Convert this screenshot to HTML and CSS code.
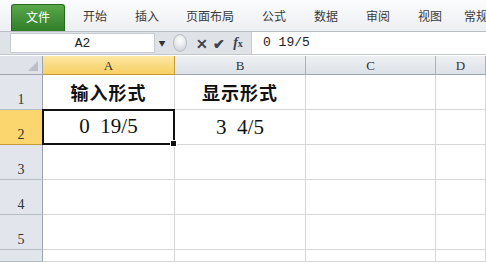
FILE: index.html
```html
<!DOCTYPE html>
<html lang="zh-CN">
<head>
    <meta charset="UTF-8">
    <title>Excel</title>
    <link rel="stylesheet" href="styles.css">
</head>
<body>
    <div class="ribbon">
        <div class="tab file">文件</div>
        <div class="tab t1">开始</div>
        <div class="tab t2">插入</div>
        <div class="tab t3">页面布局</div>
        <div class="tab t4">公式</div>
        <div class="tab t5">数据</div>
        <div class="tab t6">审阅</div>
        <div class="tab t7">视图</div>
        <div class="tab t8">常规</div>
    </div>
    <div class="formulaBar">
        <div class="nameBox">A2</div>
        <div class="arrow">&#9660;</div>
        <div class="knob"></div>
        <div class="fbtn cancel">&#10005;</div>
        <div class="fbtn ok">&#10004;</div>
        <div class="fbtn fx"><i>f</i><span>x</span></div>
        <div class="formulaInput">0 19/5</div>
    </div>
    <div class="sheet">
        <div class="corner"><span class="tri"></span></div>
        <div class="colHead active">A</div>
        <div class="colHead">B</div>
        <div class="colHead">C</div>
        <div class="colHead">D</div>

        <div class="rowHead">1</div>
        <div class="cell big">输入形式</div>
        <div class="cell big">显示形式</div>
        <div class="cell"></div>
        <div class="cell"></div>

        <div class="rowHead active">2</div>
        <div class="cell big num selected">0&nbsp;&nbsp;19/5<span class="handle"></span></div>
        <div class="cell big num">3&nbsp;&nbsp;4/5</div>
        <div class="cell"></div>
        <div class="cell"></div>

        <div class="rowHead">3</div>
        <div class="cell"></div><div class="cell"></div><div class="cell"></div><div class="cell"></div>
        <div class="rowHead">4</div>
        <div class="cell"></div><div class="cell"></div><div class="cell"></div><div class="cell"></div>
        <div class="rowHead">5</div>
        <div class="cell"></div><div class="cell"></div><div class="cell"></div><div class="cell"></div>
        <div class="rowHead"></div>
        <div class="cell"></div><div class="cell"></div><div class="cell"></div><div class="cell"></div>
    </div>
</body>
</html>
```

FILE: styles.css
```css
body {
    margin: 0;
    width: 486px;
    height: 263px;
    overflow: hidden;
    background: #ffffff;
    font-family: "Noto Sans CJK SC", "Noto Sans", sans-serif;
}

.ribbon {
    height: 32px;
    display: flex;
    align-items: flex-end;
    background: linear-gradient(#fbfcfd, #eceff3);
    border-bottom: 1px solid #b9bec6;
    white-space: nowrap;
    overflow: hidden;
    box-sizing: border-box;
}
.tab {
    height: 27px;
    line-height: 24px;
    font-size: 12px;
    color: #3b3b3b;
    text-align: center;
    flex: none;
}
.file {
    margin-left: 11px;
    width: 54px;
    color: #ffffff;
    background: linear-gradient(#5aa84a, #2f7d28);
    border: 1px solid #2a6a22;
    border-bottom: none;
    border-radius: 3px 3px 0 0;
    box-sizing: border-box;
}
.t1 { width: 60px; }
.t2 { width: 44px; }
.t3 { width: 82px; }
.t4 { width: 46px; }
.t5 { width: 58px; }
.t6 { width: 46px; }
.t7 { width: 58px; }
.t8 { width: 34px; }

.formulaBar {
    height: 23px;
    display: flex;
    align-items: center;
    background: #dfe3e8;
    border-bottom: 1px solid #c3c8cf;
    margin-bottom: 1px;
    box-sizing: border-box;
}
.nameBox {
    margin-left: 10px;
    width: 145px;
    height: 20px;
    line-height: 20px;
    background: #ffffff;
    border: 1px solid #c6cbd2;
    text-align: center;
    font-family: "Liberation Mono", monospace;
    font-size: 13px;
    color: #222222;
    box-sizing: border-box;
}
.arrow {
    width: 14px;
    font-size: 7px;
    color: #333333;
    text-align: center;
}
.knob {
    width: 12px;
    height: 16px;
    margin-left: 4px;
    border-radius: 50%;
    background: radial-gradient(circle at 50% 35%, #ffffff, #c9ced5);
    border: 1px solid #b5bac2;
}
.fbtn {
    font-size: 14px;
    color: #3c4450;
    text-align: center;
    font-weight: bold;
}
.cancel { width: 18px; margin-left: 6px; }
.ok { width: 16px; }
.fx {
    width: 22px;
    font-family: "Liberation Serif", serif;
    font-size: 14px;
}
.fx span { font-size: 10px; }
.formulaInput {
    flex: 1;
    height: 22px;
    line-height: 22px;
    margin-left: 2px;
    padding-left: 11px;
    background: #ffffff;
    border-left: 1px solid #c6cbd2;
    font-family: "Liberation Mono", monospace;
    font-size: 13px;
    color: #222222;
}

.sheet {
    display: grid;
    grid-template-columns: 43px 132px 131px 130px 1fr;
    grid-template-rows: 19px repeat(5, 35px) 12px;
}
.corner {
    position: relative;
    background: #dfe3e9;
    border-right: 1px solid #9ea6b2;
    border-bottom: 1px solid #9ea6b2;
}
.tri {
    position: absolute;
    right: 4px;
    bottom: 3px;
    width: 0;
    height: 0;
    border-left: 10px solid transparent;
    border-bottom: 10px solid #b8bfc9;
}
.colHead {
    background: linear-gradient(#eef0f3, #dde2e8);
    border-right: 1px solid #aab2bd;
    border-bottom: 1px solid #9ea6b2;
    text-align: center;
    line-height: 19px;
    font-family: "Liberation Serif", serif;
    font-size: 13px;
    color: #333333;
}
.colHead.active {
    background: linear-gradient(#fce7a4, #f8cf62);
    border-bottom-color: #c29b3d;
    border-right-color: #c29b3d;
}
.rowHead {
    background: #e2e6ec;
    border-right: 1px solid #9ea6b2;
    border-bottom: 1px solid #b6bdc7;
    display: flex;
    align-items: flex-end;
    justify-content: center;
    padding-bottom: 1px;
    font-family: "Liberation Serif", serif;
    font-size: 14px;
    color: #333333;
    box-sizing: border-box;
}
.rowHead.active {
    background: #fbd66e;
    border-bottom-color: #c29b3d;
}
.cell {
    border-right: 1px solid #d6d6d6;
    border-bottom: 1px solid #d6d6d6;
    box-sizing: border-box;
}
.big {
    display: flex;
    align-items: flex-end;
    justify-content: center;
    padding-bottom: 4px;
    font-family: "Noto Sans CJK SC", serif;
    font-size: 18px;
    font-weight: bold;
    color: #111111;
    letter-spacing: 1px;
}
.num {
    font-family: "Liberation Serif", serif;
    font-size: 21px;
    font-weight: normal;
    letter-spacing: 0;
}
.selected {
    position: relative;
    border: 2px solid #111111;
    margin-left: -1px;
    margin-top: -1px;
}
.handle {
    position: absolute;
    right: -4px;
    bottom: -4px;
    width: 5px;
    height: 5px;
    background: #111111;
    border: 1px solid #ffffff;
}
```
